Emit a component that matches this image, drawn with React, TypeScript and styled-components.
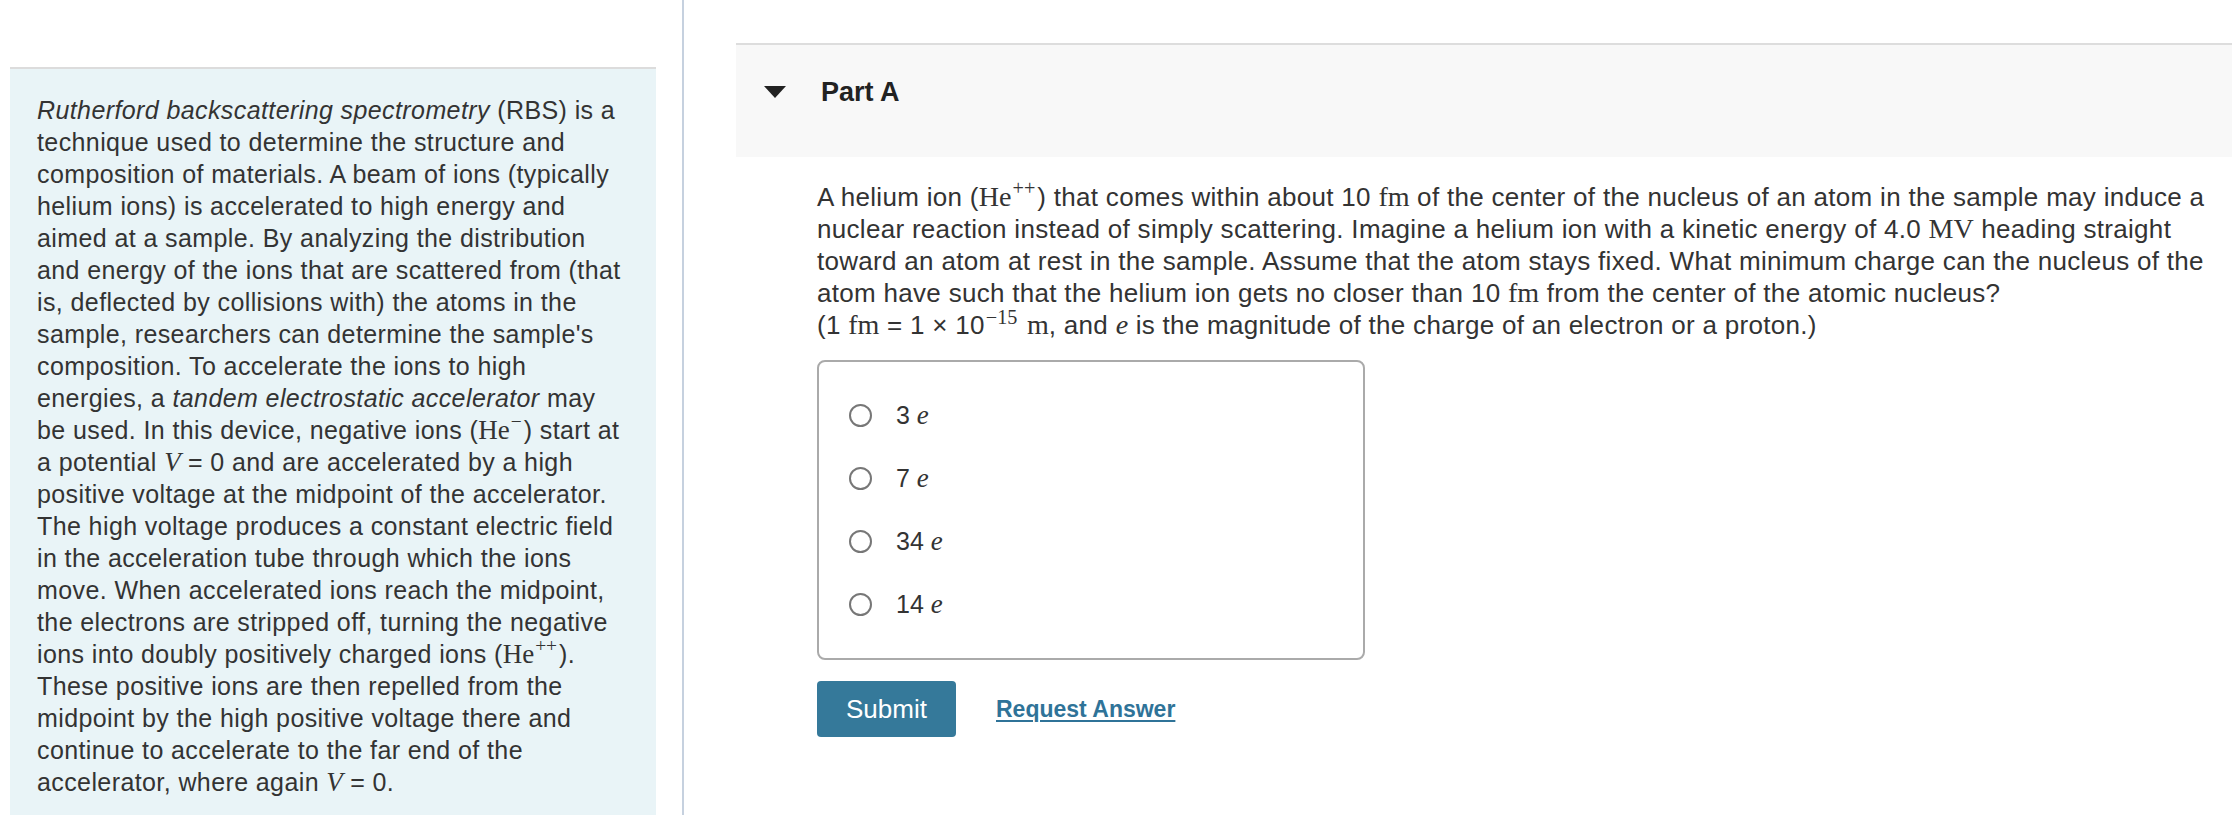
import React from 'react'
import styled, { createGlobalStyle } from 'styled-components'

const GlobalStyle = createGlobalStyle`
  html, body {
    margin: 0;
    padding: 0;
    background: #ffffff;
  }
  body {
    font-family: "Liberation Sans", Arial, Helvetica, sans-serif;
    color: #333333;
  }
`

const Page = styled.div`
  display: flex;
  min-height: 100vh;
`

const LeftColumn = styled.div`
  width: 684px;
  flex-shrink: 0;
  border-right: 2px solid #c6d1df;
  box-sizing: border-box;
  padding: 67px 26px 0 10px;
`

const IntroPanel = styled.div`
  background: #e9f4f7;
  border-top: 2px solid #dcdcdc;
  padding: 25px 31px 40px 27px;
  font-size: 25px;
  line-height: 32px;
  letter-spacing: 0.4px;
  min-height: 700px;
`

const RightColumn = styled.div`
  flex: 1;
  padding: 43px 2px 0 52px;
`

const PartHeader = styled.div`
  display: flex;
  align-items: center;
  background: #f8f8f8;
  border-top: 2px solid #dddddd;
  padding: 31px 0 49px 28px;
`

const Caret = styled.span`
  width: 0;
  height: 0;
  border-left: 11px solid transparent;
  border-right: 11px solid transparent;
  border-top: 12px solid #222222;
  margin-right: 35px;
`

const PartTitle = styled.h2`
  margin: 0;
  font-size: 27px;
  line-height: 32px;
  font-weight: bold;
  color: #222222;
`

const PartBody = styled.div`
  padding: 24px 17px 0 81px;
`

const Question = styled.p`
  margin: 0;
  font-size: 26px;
  line-height: 32px;
  letter-spacing: 0.3px;
`

const Math = styled.span<{ italic?: boolean }>`
  font-family: "Liberation Serif", "Times New Roman", serif;
  font-style: ${(props) => (props.italic ? 'italic' : 'normal')};
  font-size: 1.08em;
  letter-spacing: 0;
`

const Sup = styled.sup`
  font-size: 0.72em;
  line-height: 0;
  vertical-align: 0.55em;
  margin: 0 2px 0 1px;
`

const OptionBox = styled.div`
  width: 548px;
  box-sizing: border-box;
  margin-top: 19px;
  border: 2px solid #aaaaaa;
  border-radius: 8px;
  padding: 22px 0 22px 30px;
`

const OptionRow = styled.label`
  display: flex;
  align-items: center;
  height: 63px;
  font-size: 25px;
`

const Radio = styled.input`
  appearance: none;
  width: 23px;
  height: 23px;
  margin: 0 24px 0 0;
  border: 2px solid #777777;
  border-radius: 50%;
  box-sizing: border-box;
  background: #ffffff;
`

const Actions = styled.div`
  display: flex;
  align-items: center;
  gap: 40px;
  margin-top: 21px;
`

const SubmitButton = styled.button`
  width: 139px;
  height: 56px;
  border: none;
  border-radius: 4px;
  background: #35799a;
  color: #ffffff;
  font-family: inherit;
  font-size: 26px;
`

const RequestLink = styled.a`
  color: #2f7398;
  font-size: 23px;
  font-weight: bold;
  text-decoration: underline;
  text-decoration-thickness: 2px;
  text-underline-offset: 3px;
`

const options = ['3', '7', '34', '14']

export default function App() {
  return (
    <Page>
      <GlobalStyle />
      <LeftColumn>
        <IntroPanel>
          <i>Rutherford backscattering spectrometry</i> (RBS) is a technique used to determine
          the structure and composition of materials. A beam of ions (typically helium ions) is
          accelerated to high energy and aimed at a sample. By analyzing the distribution and
          energy of the ions that are scattered from (that is, deflected by collisions with) the
          atoms in the sample, researchers can determine the sample's composition. To accelerate
          the ions to high energies, a <i>tandem electrostatic accelerator</i> may be used. In
          this device, negative ions (<Math>He<Sup>−</Sup></Math>) start at a potential{' '}
          <Math italic>V</Math> = 0 and are accelerated by a high positive voltage at the
          midpoint of the accelerator. The high voltage produces a constant electric field in the
          acceleration tube through which the ions move. When accelerated ions reach the
          midpoint, the electrons are stripped off, turning the negative ions into doubly
          positively charged ions (<Math>He<Sup>++</Sup></Math>). These positive ions are then
          repelled from the midpoint by the high positive voltage there and continue to
          accelerate to the far end of the accelerator, where again <Math italic>V</Math> = 0.
        </IntroPanel>
      </LeftColumn>

      <RightColumn>
        <PartHeader>
          <Caret />
          <PartTitle>Part A</PartTitle>
        </PartHeader>

        <PartBody>
          <Question>
            A helium ion (<Math>He<Sup>++</Sup></Math>) that comes within about 10{' '}
            <Math>fm</Math> of the center of the nucleus of an atom in the sample may induce a
            nuclear reaction instead of simply scattering. Imagine a helium ion with a kinetic
            energy of 4.0 <Math>MV</Math> heading straight toward an atom at rest in the sample.
            Assume that the atom stays fixed. What minimum charge can the nucleus of the atom have
            such that the helium ion gets no closer than 10 <Math>fm</Math> from the center of the
            atomic nucleus?
            <br />
            (1 <Math>fm</Math> = 1 × 10<Sup><Math>−15</Math></Sup> <Math>m</Math>, and{' '}
            <Math italic>e</Math> is the magnitude of the charge of an electron or a proton.)
          </Question>

          <OptionBox>
            {options.map((value) => (
              <OptionRow key={value}>
                <Radio type="radio" name="partA" />
                {value}&nbsp;<Math italic>e</Math>
              </OptionRow>
            ))}
          </OptionBox>

          <Actions>
            <SubmitButton>Submit</SubmitButton>
            <RequestLink href="#">Request Answer</RequestLink>
          </Actions>
        </PartBody>
      </RightColumn>
    </Page>
  )
}
